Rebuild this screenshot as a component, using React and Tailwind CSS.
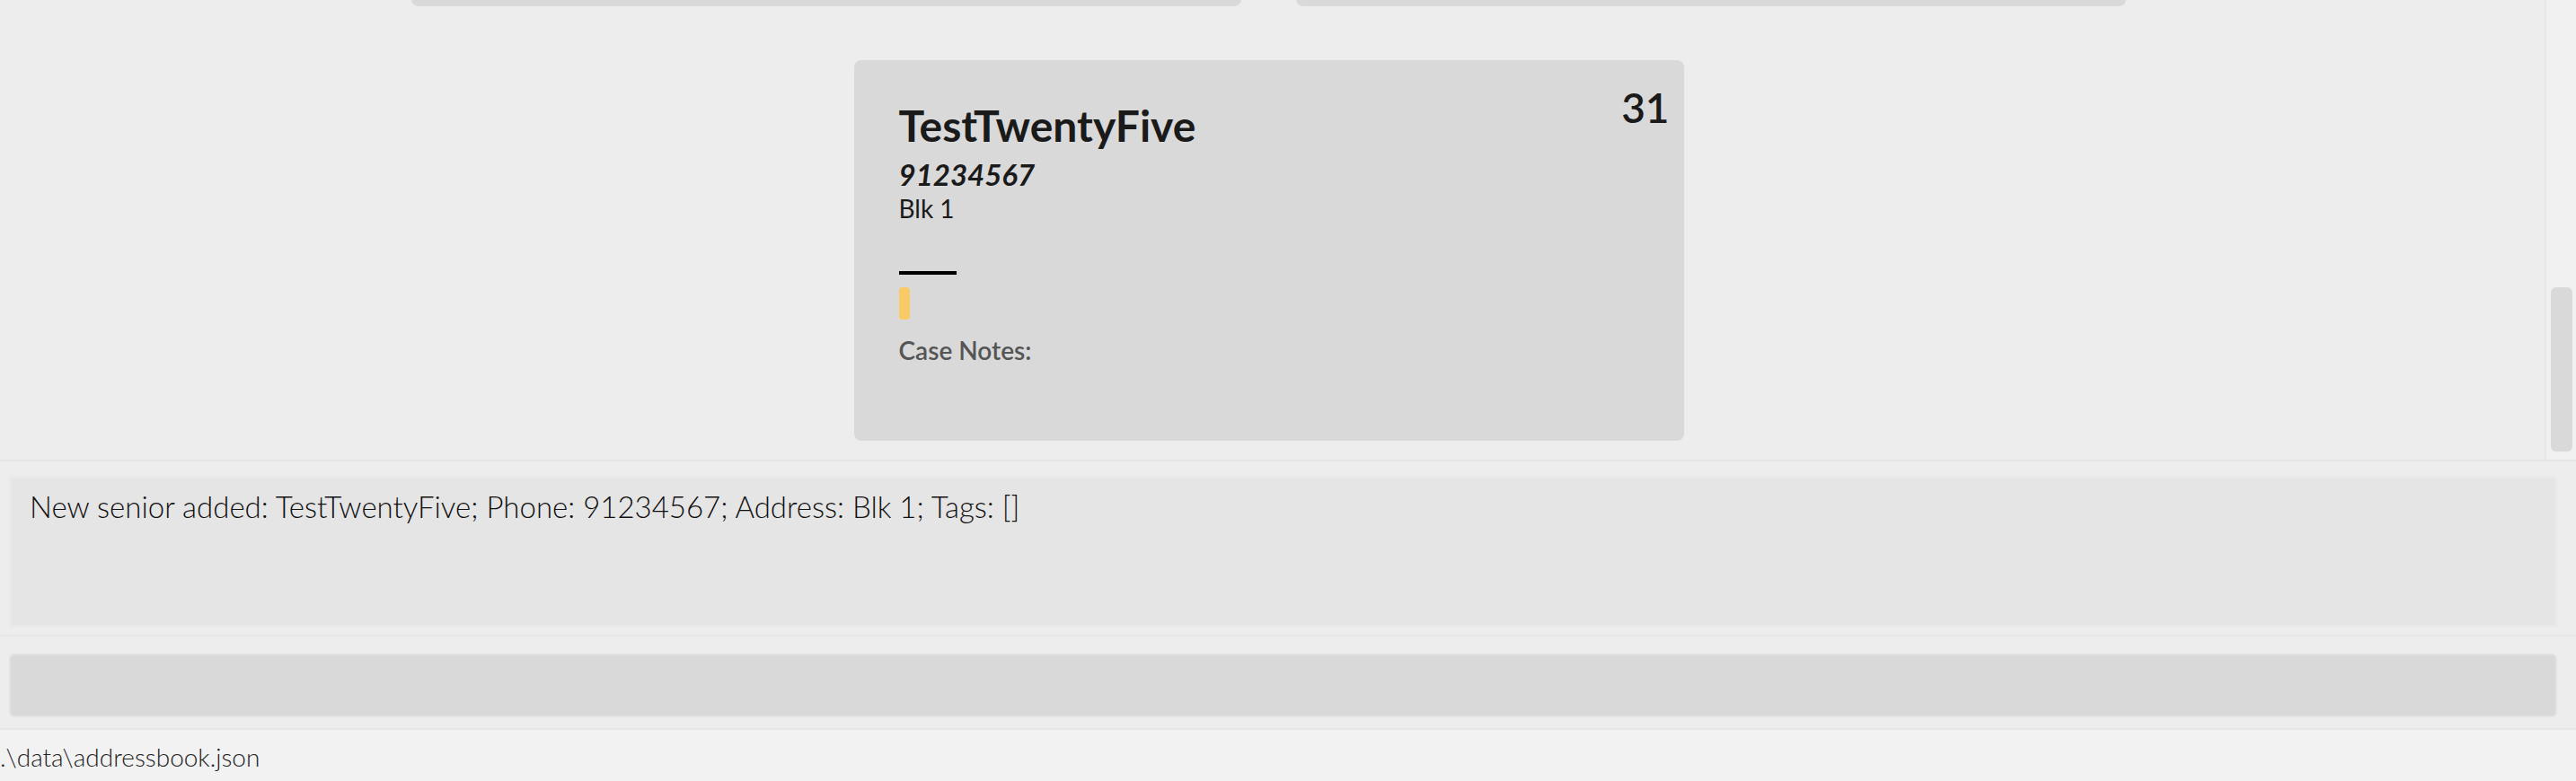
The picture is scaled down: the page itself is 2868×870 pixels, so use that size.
import React from 'react';

const PersonCard = ({ name, phone, address, index, cut }) => (
    <div className="relative flex w-[924px] h-[424px] rounded-[8px] bg-[#d9d9d9] pl-[50px] pr-[16px]">
        {!cut && (
            <>
                <div className="flex flex-col flex-1 pt-[44px]">
                    <div className="text-[48px] leading-[1.2] font-bold text-[#1a1a1a]">{name}</div>
                    <div className="mt-[6px] text-[33px] leading-[1.2] font-bold italic text-[#1a1a1a]">{phone}</div>
                    <div className="mt-[2px] text-[28px] leading-[1.2] text-[#1a1a1a]">{address}</div>
                    <div className="mt-[52px] w-[64px] h-[4px] bg-black"></div>
                    <div className="mt-[14px] w-[12px] h-[36px] rounded-[4px] bg-[#f9ca66]"></div>
                    <div className="mt-[18px] text-[28px] leading-[1.2] font-semibold text-[#555555]">Case Notes:</div>
                </div>
                <div className="pt-[25px] text-[46px] leading-[1.2] font-semibold text-[#1a1a1a]">{index}</div>
            </>
        )}
    </div>
);

export default function App() {
    return (
        <div className="w-[2868px] h-[870px] flex flex-col bg-[#ededed] font-['Lato','Open_Sans',sans-serif] overflow-hidden">
            {/* list */}
            <div className="flex h-[514px] shrink-0 border-b-[2px] border-[#e3e3e3]">
                <div className="flex-1 overflow-hidden pr-[8px] border-r-[2px] border-[#e6e6e6]">
                    <div className="w-[1909px] mx-auto -mt-[417px] flex flex-wrap justify-center gap-x-[61px] gap-y-[60px]">
                        <PersonCard cut />
                        <PersonCard cut />
                        <PersonCard name="TestTwentyFive" phone="91234567" address="Blk 1" index="31" />
                    </div>
                </div>
                <div className="w-[33px] bg-[#f0f0f0] pl-[5px] pr-[4px] pt-[320px]">
                    <div className="h-[183px] rounded-[6px] bg-[#d9d9d9]"></div>
                </div>
            </div>

            {/* result */}
            <div className="h-[195px] shrink-0 pt-[16px] pb-[8px] pl-[10px] pr-[21px] border-b-[2px] border-[#e6e6e6]">
                <div className="h-full border-[3px] border-[#e9e9e9] bg-[#e5e5e5] pl-[20px] pt-[12px]">
                    <div className="text-[33px] leading-[1.2] font-light text-[#111111]">
                        New senior added: TestTwentyFive; Phone: 91234567; Address: Blk 1; Tags: []
                    </div>
                </div>
            </div>

            {/* command box */}
            <div className="h-[104px] shrink-0 pt-[19px] pb-[12px] pl-[10px] pr-[21px] border-b-[2px] border-[#e6e6e6]">
                <div className="h-full rounded-[6px] border-[2px] border-[#e2e2e2] bg-[#d9d9d9]"></div>
            </div>

            {/* status bar */}
            <div className="flex-1 bg-[#f2f2f2] pt-[14px]">
                <span className="text-[28px] leading-[1.2] font-light text-[#222222]">.\data\addressbook.json</span>
            </div>
        </div>
    );
}
